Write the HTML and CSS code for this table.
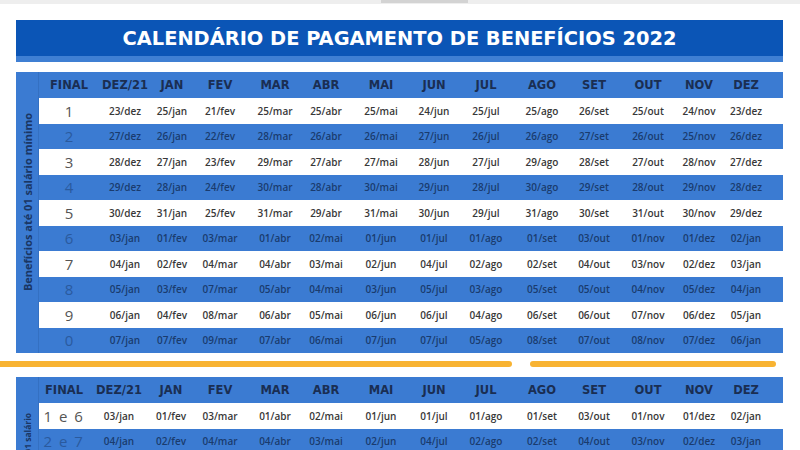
FILE: index.html
```html
<!DOCTYPE html>
<html lang="pt-BR">
<head>
<meta charset="utf-8">
<title>Calendário de Pagamento de Benefícios 2022</title>
<link rel="stylesheet" href="styles.css">
</head>
<body>
<div class="topbar"><div class="tab"></div></div>
<main class="page">
  <h1 class="title">CALENDÁRIO DE PAGAMENTO DE BENEFÍCIOS 2022</h1>

  <section class="cal cal-one">
    <div class="side"><span class="side-label">Benefícios até 01 salário mínimo</span></div>
    <div class="grid">
      <div class="row head"><span>FINAL</span><span>DEZ/21</span><span>JAN</span><span>FEV</span><span>MAR</span><span>ABR</span><span>MAI</span><span>JUN</span><span>JUL</span><span>AGO</span><span>SET</span><span>OUT</span><span>NOV</span><span>DEZ</span></div>
      <div class="row light"><span class="fin">1</span><span>23/dez</span><span>25/jan</span><span>21/fev</span><span>25/mar</span><span>25/abr</span><span>25/mai</span><span>24/jun</span><span>25/jul</span><span>25/ago</span><span>26/set</span><span>25/out</span><span>24/nov</span><span>23/dez</span></div>
      <div class="row blue"><span class="fin">2</span><span>27/dez</span><span>26/jan</span><span>22/fev</span><span>28/mar</span><span>26/abr</span><span>26/mai</span><span>27/jun</span><span>26/jul</span><span>26/ago</span><span>27/set</span><span>26/out</span><span>25/nov</span><span>26/dez</span></div>
      <div class="row light"><span class="fin">3</span><span>28/dez</span><span>27/jan</span><span>23/fev</span><span>29/mar</span><span>27/abr</span><span>27/mai</span><span>28/jun</span><span>27/jul</span><span>29/ago</span><span>28/set</span><span>27/out</span><span>28/nov</span><span>27/dez</span></div>
      <div class="row blue"><span class="fin">4</span><span>29/dez</span><span>28/jan</span><span>24/fev</span><span>30/mar</span><span>28/abr</span><span>30/mai</span><span>29/jun</span><span>28/jul</span><span>30/ago</span><span>29/set</span><span>28/out</span><span>29/nov</span><span>28/dez</span></div>
      <div class="row light"><span class="fin">5</span><span>30/dez</span><span>31/jan</span><span>25/fev</span><span>31/mar</span><span>29/abr</span><span>31/mai</span><span>30/jun</span><span>29/jul</span><span>31/ago</span><span>30/set</span><span>31/out</span><span>30/nov</span><span>29/dez</span></div>
      <div class="row blue"><span class="fin">6</span><span>03/jan</span><span>01/fev</span><span>03/mar</span><span>01/abr</span><span>02/mai</span><span>01/jun</span><span>01/jul</span><span>01/ago</span><span>01/set</span><span>03/out</span><span>01/nov</span><span>01/dez</span><span>02/jan</span></div>
      <div class="row light"><span class="fin">7</span><span>04/jan</span><span>02/fev</span><span>04/mar</span><span>04/abr</span><span>03/mai</span><span>02/jun</span><span>04/jul</span><span>02/ago</span><span>02/set</span><span>04/out</span><span>03/nov</span><span>02/dez</span><span>03/jan</span></div>
      <div class="row blue"><span class="fin">8</span><span>05/jan</span><span>03/fev</span><span>07/mar</span><span>05/abr</span><span>04/mai</span><span>03/jun</span><span>05/jul</span><span>03/ago</span><span>05/set</span><span>05/out</span><span>04/nov</span><span>05/dez</span><span>04/jan</span></div>
      <div class="row light"><span class="fin">9</span><span>06/jan</span><span>04/fev</span><span>08/mar</span><span>06/abr</span><span>05/mai</span><span>06/jun</span><span>06/jul</span><span>04/ago</span><span>06/set</span><span>06/out</span><span>07/nov</span><span>06/dez</span><span>05/jan</span></div>
      <div class="row blue"><span class="fin">0</span><span>07/jan</span><span>07/fev</span><span>09/mar</span><span>07/abr</span><span>06/mai</span><span>07/jun</span><span>07/jul</span><span>05/ago</span><span>08/set</span><span>07/out</span><span>08/nov</span><span>07/dez</span><span>06/jan</span></div>
    </div>
  </section>

  <div class="divider"><span class="seg seg-left"></span><span class="seg seg-right"></span></div>

  <section class="cal cal-two">
    <div class="side"><span class="side-label">Benefícios acima de 01 salário</span></div>
    <div class="grid">
      <div class="row head"><span>FINAL</span><span>DEZ/21</span><span>JAN</span><span>FEV</span><span>MAR</span><span>ABR</span><span>MAI</span><span>JUN</span><span>JUL</span><span>AGO</span><span>SET</span><span>OUT</span><span>NOV</span><span>DEZ</span></div>
      <div class="row light"><span class="fin">1 e 6</span><span>03/jan</span><span>01/fev</span><span>03/mar</span><span>01/abr</span><span>02/mai</span><span>01/jun</span><span>01/jul</span><span>01/ago</span><span>01/set</span><span>03/out</span><span>01/nov</span><span>01/dez</span><span>02/jan</span></div>
      <div class="row blue"><span class="fin">2 e 7</span><span>04/jan</span><span>02/fev</span><span>04/mar</span><span>04/abr</span><span>03/mai</span><span>02/jun</span><span>04/jul</span><span>02/ago</span><span>02/set</span><span>04/out</span><span>03/nov</span><span>02/dez</span><span>03/jan</span></div>
    </div>
  </section>
</main>
</body>
</html>
```

FILE: styles.css
```css
html, body {
  margin: 0;
  padding: 0;
  background: #ffffff;
  overflow: hidden;
}

body {
  width: 800px;
  height: 450px;
  font-family: "Open Sans", "DejaVu Sans", sans-serif;
}

.topbar {
  height: 4px;
  background: #eeeeee;
}

.tab {
  margin-left: 381px;
  width: 87px;
  height: 3px;
  background: #d3d3d3;
}

.page {
  padding: 16px 17px 0 16px;
}

.title {
  margin: 0;
  height: 36px;
  border-bottom: 6px solid #3f7fd3;
  background: #0b55b6;
  color: #ffffff;
  font-family: "DejaVu Sans", "Open Sans", sans-serif;
  font-weight: bold;
  font-size: 19.4px;
  line-height: 38px;
  text-align: center;
}

.cal {
  display: flex;
  margin-top: 10px;
  background: #3b7bd2;
}

.side {
  width: 23px;
  flex: none;
  display: flex;
  justify-content: center;
  align-items: flex-start;
  box-sizing: border-box;
  border-right: 1px solid #3470c2;
  overflow: hidden;
}

.side-label {
  writing-mode: vertical-rl;
  transform: rotate(180deg);
  color: #1a3664;
  font-weight: 700;
  font-size: 11px;
  white-space: nowrap;
}

.cal-one .side {
  padding-top: 41px;
}

.cal-two .side {
  padding-top: 36px;
  height: 77px;
}

.cal-two .side-label {
  font-size: 8.5px;
}

.grid {
  flex: 1;
  display: flex;
  flex-direction: column;
}

.row {
  display: grid;
  align-items: center;
  height: 25.5px;
  font-size: 10px;
  font-weight: 600;
}

.cal-one .row {
  grid-template-columns: 60px 52px 42px 54px 56px 46px 64px 42px 62px 50px 54px 54px 48px 46px 1fr;
}

.cal-two .row {
  grid-template-columns: 50px 60px 44px 54px 56px 46px 64px 42px 62px 50px 54px 54px 48px 46px 1fr;
}

.row > span {
  text-align: center;
  white-space: nowrap;
}

.row.head {
  height: 26px;
  color: #1a2e52;
  font-family: "DejaVu Sans", "Open Sans", sans-serif;
  font-weight: bold;
  font-size: 11.5px;
}

.row.light {
  background: #ffffff;
  color: #383838;
}

.row.blue {
  background: #3b7bd2;
  color: #1a3b6e;
}

.row .fin {
  font-size: 15px;
  font-weight: 400;
  color: #555555;
}

.row.blue .fin {
  color: #2a5a9e;
}

.cal-two .row .fin {
  letter-spacing: 1.5px;
}

.divider {
  display: flex;
  gap: 18px;
  margin: 8px 0 0 -16px;
  height: 6px;
}

.seg {
  display: block;
  height: 6px;
  border-radius: 3px;
  background: #f8b332;
}

.seg-left {
  width: 512px;
  border-radius: 0 3px 3px 0;
}

.seg-right {
  width: 246px;
}
```
